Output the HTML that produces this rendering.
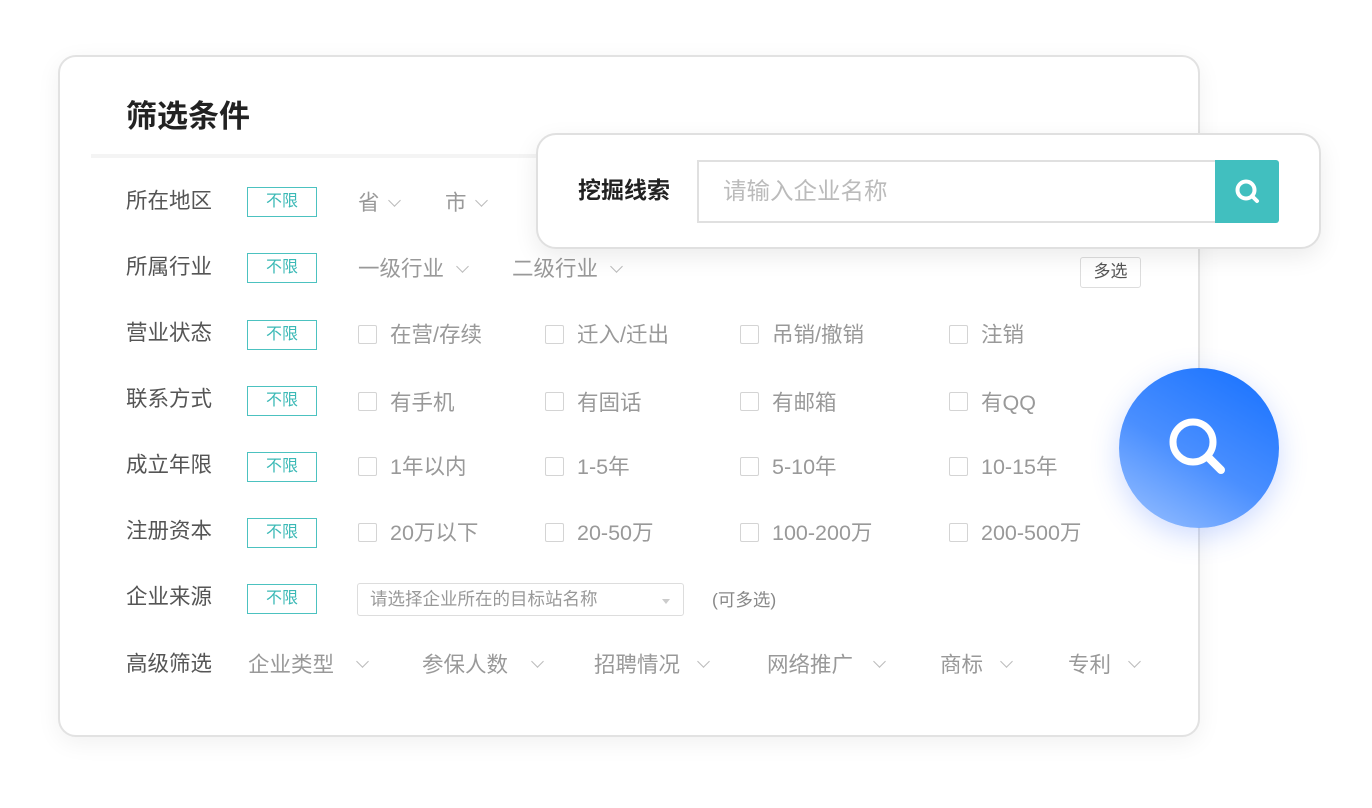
<!DOCTYPE html>
<html><head><meta charset="utf-8"><style>
*{margin:0;padding:0;box-sizing:border-box}
body{width:1372px;height:808px;background:#fff;position:relative;overflow:hidden;font-family:"Liberation Sans","Noto Sans CJK SC",sans-serif}
.a{position:absolute;white-space:nowrap}
.card{left:58px;top:55px;width:1142px;height:682px;border:2px solid #e2e2e2;border-radius:18px;box-shadow:0 6px 24px rgba(0,0,0,.06);background:#fff}
.lab{font-size:21.5px;color:#555;left:126px;line-height:30px}
.tag{left:247px;width:70px;height:30px;border:1.5px solid #4cc2c0;color:#3bb9b6;font-size:16px;text-align:center;line-height:27px}
.opt{font-size:21.5px;color:#999;line-height:30px}
.cb{width:19px;height:19px;border:1.5px solid #d4d4d4;border-radius:2px;background:#fff}
.chev{width:9px;height:9px;border-right:1.5px solid #bbb;border-bottom:1.5px solid #bbb;transform:rotate(45deg)}
</style></head><body>
<div class="a card"></div>
<div class="a" style="left:126px;top:96px;font-size:31px;font-weight:bold;color:#222;line-height:42px">筛选条件</div>
<div class="a" style="left:91px;top:154px;width:450px;height:4px;background:#f4f4f4"></div>

<div class="a lab" style="top:186px">所在地区</div><div class="a tag" style="top:187px">不限</div>
<div class="a opt" style="left:358px;top:188px">省</div><div class="a chev" style="left:390px;top:196px"></div>
<div class="a opt" style="left:445px;top:188px">市</div><div class="a chev" style="left:477px;top:196px"></div>

<div class="a lab" style="top:252px">所属行业</div><div class="a tag" style="top:253px">不限</div>
<div class="a opt" style="left:358px;top:254px">一级行业</div><div class="a chev" style="left:458px;top:262px"></div>
<div class="a opt" style="left:512px;top:254px">二级行业</div><div class="a chev" style="left:612px;top:262px"></div>
<div class="a" style="left:1080px;top:257px;width:61px;height:31px;border:1.5px solid #ddd;border-radius:3px;font-size:17px;color:#555;text-align:center;line-height:28px">多选</div>

<div class="a lab" style="top:318px">营业状态</div><div class="a tag" style="top:320px">不限</div>
<div class="a lab" style="top:384px">联系方式</div><div class="a tag" style="top:386px">不限</div>
<div class="a lab" style="top:450px">成立年限</div><div class="a tag" style="top:452px">不限</div>
<div class="a lab" style="top:516px">注册资本</div><div class="a tag" style="top:518px">不限</div>
<div class="a lab" style="top:582px">企业来源</div><div class="a tag" style="top:584px">不限</div>
<div class="a lab" style="top:649px">高级筛选</div>

<div class="a cb" style="left:358px;top:325px"></div><div class="a opt" style="left:390px;top:320px">在营/存续</div>
<div class="a cb" style="left:545px;top:325px"></div><div class="a opt" style="left:577px;top:320px">迁入/迁出</div>
<div class="a cb" style="left:740px;top:325px"></div><div class="a opt" style="left:772px;top:320px">吊销/撤销</div>
<div class="a cb" style="left:949px;top:325px"></div><div class="a opt" style="left:981px;top:320px">注销</div>

<div class="a cb" style="left:358px;top:392px"></div><div class="a opt" style="left:390px;top:388px">有手机</div>
<div class="a cb" style="left:545px;top:392px"></div><div class="a opt" style="left:577px;top:388px">有固话</div>
<div class="a cb" style="left:740px;top:392px"></div><div class="a opt" style="left:772px;top:388px">有邮箱</div>
<div class="a cb" style="left:949px;top:392px"></div><div class="a opt" style="left:981px;top:388px">有QQ</div>

<div class="a cb" style="left:358px;top:457px"></div><div class="a opt" style="left:390px;top:452px">1年以内</div>
<div class="a cb" style="left:545px;top:457px"></div><div class="a opt" style="left:577px;top:452px">1-5年</div>
<div class="a cb" style="left:740px;top:457px"></div><div class="a opt" style="left:772px;top:452px">5-10年</div>
<div class="a cb" style="left:949px;top:457px"></div><div class="a opt" style="left:981px;top:452px">10-15年</div>

<div class="a cb" style="left:358px;top:523px"></div><div class="a opt" style="left:390px;top:518px">20万以下</div>
<div class="a cb" style="left:545px;top:523px"></div><div class="a opt" style="left:577px;top:518px">20-50万</div>
<div class="a cb" style="left:740px;top:523px"></div><div class="a opt" style="left:772px;top:518px">100-200万</div>
<div class="a cb" style="left:949px;top:523px"></div><div class="a opt" style="left:981px;top:518px">200-500万</div>

<div class="a" style="left:357px;top:583px;width:327px;height:33px;border:1.5px solid #ddd;border-radius:3px;font-size:17.5px;color:#999;padding-left:12px;line-height:30px">请选择企业所在的目标站名称</div>
<div class="a" style="left:662px;top:599px;width:0;height:0;border-left:4px solid transparent;border-right:4px solid transparent;border-top:5px solid #ccc"></div>
<div class="a" style="left:712px;top:587px;font-size:17.5px;color:#888;line-height:26px">(可多选)</div>

<div class="a opt" style="left:248px;top:650px">企业类型</div><div class="a chev" style="left:358px;top:657px"></div>
<div class="a opt" style="left:422px;top:650px">参保人数</div><div class="a chev" style="left:533px;top:657px"></div>
<div class="a opt" style="left:594px;top:650px">招聘情况</div><div class="a chev" style="left:699px;top:657px"></div>
<div class="a opt" style="left:767px;top:650px">网络推广</div><div class="a chev" style="left:875px;top:657px"></div>
<div class="a opt" style="left:940px;top:650px">商标</div><div class="a chev" style="left:1002px;top:657px"></div>
<div class="a opt" style="left:1068px;top:650px">专利</div><div class="a chev" style="left:1130px;top:657px"></div>

<div class="a" style="left:536px;top:133px;width:785px;height:116px;border:2px solid #e0e0e0;border-radius:20px;background:#fff;box-shadow:0 8px 24px rgba(0,0,0,.08)"></div>
<div class="a" style="left:578px;top:174px;font-size:23px;font-weight:bold;color:#222;line-height:32px">挖掘线索</div>
<div class="a" style="left:697px;top:160px;width:520px;height:63px;border:2px solid #e0e0e0;font-size:23.5px;color:#bbb;padding-left:24px;line-height:58px">请输入企业名称</div>
<div class="a" style="left:1215px;top:160px;width:64px;height:63px;background:#41bfbf;border-radius:0 3px 3px 0"></div>
<svg class="a" style="left:1229px;top:174px" width="36" height="36" viewBox="0 0 36 36"><circle cx="17" cy="16" r="8.5" fill="none" stroke="#fff" stroke-width="4"/><line x1="23" y1="22" x2="28" y2="27" stroke="#fff" stroke-width="4" stroke-linecap="round"/></svg>

<div class="a" style="left:1119px;top:368px;width:160px;height:160px;border-radius:50%;background:linear-gradient(210deg,#1570ff 0%,#4a8fff 55%,#9cc2ff 100%);box-shadow:0 8px 28px rgba(60,110,255,.25)"></div>
<svg class="a" style="left:1159px;top:408px" width="80" height="80" viewBox="0 0 80 80"><circle cx="34" cy="34" r="20" fill="none" stroke="#fff" stroke-width="7"/><line x1="50" y1="50" x2="62" y2="62" stroke="#fff" stroke-width="8" stroke-linecap="round"/></svg>
</body></html>
